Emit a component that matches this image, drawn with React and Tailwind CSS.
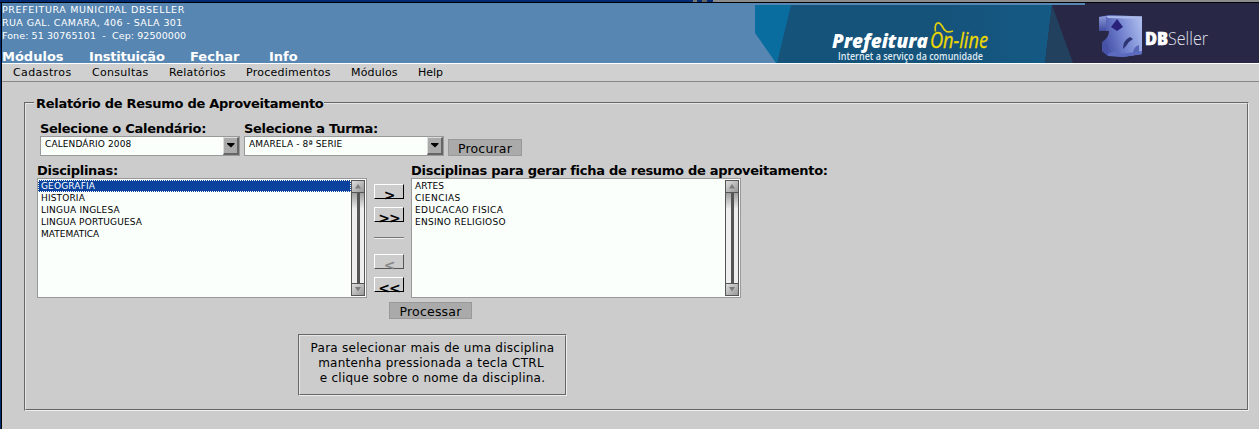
const groove = 'border border-t-[#666] border-l-[#666] border-r-[#eee] border-b-[#eee]';
const grooveIn = 'border border-t-[#e6e6e6] border-l-[#e6e6e6] border-r-[#666] border-b-[#666]';
const label = 'h-[15px] text-[13px] leading-[15px] font-bold tracking-[-0.28px] whitespace-nowrap';

function Brand() {
  return (
    <svg className="block shrink-0" width="504" height="60" viewBox="0 0 504 60">
      <defs>
        <linearGradient id="mid" x1="0" x2="1">
          <stop offset="0" stopColor="#15537b" />
          <stop offset="0.65" stopColor="#15537b" />
          <stop offset="1" stopColor="#145a84" />
        </linearGradient>
        <linearGradient id="cube" x1="0" x2="1" y1="0.3" y2="0">
          <stop offset="0" stopColor="#4450a6" />
          <stop offset="0.45" stopColor="#7383d0" />
          <stop offset="1" stopColor="#b3c3f0" />
        </linearGradient>
        <linearGradient id="side" x1="0" x2="0" y2="1">
          <stop offset="0" stopColor="#8b99d8" />
          <stop offset="1" stopColor="#414ca0" />
        </linearGradient>
        <filter id="soft"><feGaussianBlur stdDeviation="0.6" /></filter>
      </defs>
      <rect width="504" height="60" fill="#282846" />
      <path d="M0 0H330V2H0Z" fill="#5786b2" />
      <path d="M0 2H297L290 60H0Z" fill="url(#mid)" />
      <path d="M297 2L318 60H290Z" fill="#22415f" />
      <path d="M0 2H36L22 60H0Z" fill="#0a6d9f" />
      <path d="M0 30L21 60H0Z" fill="#5786b2" />
      <text x="77" y="45" textLength="96" lengthAdjust="spacingAndGlyphs" fill="#fff" fontFamily="Open Sans" fontWeight="800" fontStyle="italic" fontSize="20">Prefeitura</text>
      <text x="175" y="45" textLength="58" lengthAdjust="spacingAndGlyphs" fill="#f0d900" stroke="#f0d900" strokeWidth="0.3" fontFamily="Open Sans" fontStyle="italic" fontSize="21">On-line</text>
      <path d="M180.500 28.500C179 19 184 18 187 23C190 29 192 30 198 28" fill="none" stroke="#e0ce10" strokeWidth="1.7" />
      <text x="83" y="57" textLength="145" lengthAdjust="spacingAndGlyphs" fill="#dfeaf2" fontFamily="Open Sans" fontWeight="600" fontSize="10">Internet a serviço da comunidade</text>
      <g filter="url(#soft)">
        <path d="M344 14L354 12L387 13.500V51L368 54L352 52.500L347 48V39Q354 35 354 28H344Z" fill="url(#cube)" />
        <path d="M344 14L351 13V28H344Z" fill="url(#side)" />
        <path d="M351 13L387 13.500V16L353 15Z" fill="#aab8ea" />
        <path d="M347 39L353 42L353 52.500L347 48Z" fill="#4651a5" />
        <path d="M362 16L368 24L362 28L356 24Z" fill="#29247a" />
        <path d="M368 46Q368 37 375 34L378 36Q374 38 371 43Z" fill="#2f3474" />
        <path d="M378 50Q378 44 384 42L384 50Z" fill="#5866b6" />
        <path d="M353 51Q360 46 366 51L387 48V51L368 54L353 53Z" fill="#5b6abf" />
      </g>
      <text x="390" y="41.500" textLength="23" lengthAdjust="spacingAndGlyphs" fill="#fff" stroke="#fff" strokeWidth="0.6" fontFamily="Open Sans" fontWeight="800" fontSize="17">DB</text>
      <text x="413" y="41.500" textLength="40" lengthAdjust="spacingAndGlyphs" fill="#e2e2ee" fontFamily="Open Sans" fontWeight="300" fontSize="18">Seller</text>
    </svg>
  );
}

function Select({ value }) {
  return (
    <div className="flex h-[20px] w-[200px] justify-between border border-[#999] bg-[#fafffc]">
      <span className="pl-[4px] pt-px text-[9px] leading-[12px] tracking-[0.12px]">{value}</span>
      <span className="flex h-[18px] w-[16px] items-center justify-center border-t border-l border-r-2 border-b-2 border-t-[#ddd] border-l-[#ddd] border-r-[#666] border-b-[#666] bg-[#aaa]">
        <svg width="8" height="5" viewBox="0 0 8 5"><path d="M0 0H7.5V1L4 4.5L0 1Z" /></svg>
      </span>
    </div>
  );
}

function Arrow({ down }) {
  return (
    <span className="flex h-[13px] shrink-0 items-center justify-center border-y border-[#555] bg-linear-to-br from-[#ddd] to-[#999]">
      <svg width="6" height="5" viewBox="0 0 6 5"><path d={down ? 'M0 0H6L3 4.5Z' : 'M0 4.5H6L3 0Z'} fill="#7b7b7b" /></svg>
    </span>
  );
}

function List({ items, selected }) {
  return (
    <div className="flex h-[120px] w-[330px] border border-[#999] bg-[#fafffc] pr-px">
      <ul className="min-w-0 flex-1 pt-px text-[9px] leading-[12px]">
        {items.map(([t, tracking]) => (
          <li key={t} className={`${tracking} ${t === selected ? 'h-[12px] border border-dotted border-white bg-[#0a429e] pl-[2px] leading-[10px] text-white' : 'h-[12px] pl-[3px]'}`}>{t}</li>
        ))}
      </ul>
      <div className="my-px flex h-[116px] w-[14px] flex-col border-r border-l border-[#555] bg-linear-to-b from-[#999] from-10% via-[#eee] via-25% to-[#eee] to-80%">
        <Arrow />
        <span className="mx-auto w-[3px] flex-1 bg-[#555]" />
        <Arrow down />
      </div>
    </div>
  );
}

function Move({ children, off }) {
  return (
    <button className={off
      ? 'flex h-[15px] w-[30px] justify-center border border-t-white border-l-white border-r-[#555] border-b-[#555] pt-[3px] text-[14px] leading-[14px] font-bold tracking-[-1px] text-[#888]'
      : 'flex h-[15px] w-[30px] justify-center border border-t-white border-l-white border-r-black border-b-black pt-[3px] text-[14px] leading-[14px] font-bold tracking-[-1px]'}>{children}</button>
  );
}

export default function App() {
  return (
    <div className="flex h-[429px] w-[1259px] flex-col overflow-hidden bg-[#ccc] font-['DejaVu_Sans',sans-serif] text-black">
      <div className="flex h-[3px] shrink-0 border-b border-black">
        <span className="w-[693px] bg-[#032b73]" /><span className="w-[4px] bg-[#777]" /><span className="w-[5px] bg-[#032b73]" /><span className="w-[5px] bg-[#666]" /><span className="w-[6px] bg-[#032b73]" /><span className="flex-1 bg-[#8c8c8c]" />
      </div>
      <div className="flex min-h-0 flex-1 border-l border-[#032b73]">
        <div className="flex min-w-0 flex-1 flex-col border-l border-black">
          <header className="flex h-[61px] shrink-0 border-b border-white bg-[#5786b2] text-white">
            <div className="w-[753px]">
              <div className="text-[9.5px] leading-[13px] whitespace-pre">
                <p className="tracking-[0.64px]">PREFEITURA MUNICIPAL DBSELLER</p>
                <p className="tracking-[0.4px]">RUA GAL. CAMARA, 406 - SALA 301</p>
                <p className="tracking-[0.09px]">Fone: 51 30765101  -  Cep: 92500000</p>
              </div>
              <nav className="mt-[7px] flex text-[13px] leading-[16px] font-bold">
                <a className="w-[87px]">Módulos</a><a className="w-[101px] tracking-[-0.2px]">Instituição</a><a className="w-[79px]">Fechar</a><a>Info</a>
              </nav>
            </div>
            <Brand />
          </header>
          <nav className="flex h-[18px] shrink-0 border-b border-[#888] bg-[#d0d0d0] pl-[11px] text-[11px] leading-[18px]">
            <a className="w-[79px] tracking-[0.4px]">Cadastros</a><a className="w-[77px] tracking-[0.3px]">Consultas</a><a className="w-[77px] tracking-[0.2px]">Relatórios</a><a className="w-[105px] tracking-[0.25px]">Procedimentos</a><a className="w-[67px] tracking-[0.15px]">Módulos</a><a>Help</a>
          </nav>
          <section className={`mt-[20px] ml-[22px] h-[309px] w-[1225px] ${groove}`}>
            <div className={`h-full ${grooveIn}`}>
              <h1 className="-mt-[8px] ml-[8px] h-[16px] w-[290px] bg-[#ccc] pl-[2px] text-[13px] leading-[16px] font-bold tracking-[-0.28px] whitespace-nowrap">Relatório de Resumo de Aproveitamento</h1>
              <div className="mt-[9px] ml-[14px] flex gap-[4px]">
                <div><p className={label}>Selecione o Calendário:</p><Select value="CALENDÁRIO 2008" /></div>
                <div><p className={label}>Selecione a Turma:</p><Select value="AMARELA - 8ª SERIE" /></div>
                <button className="mt-[18px] h-[17px] w-[74px] border border-[#999] bg-[#aaa] text-[12.5px] leading-[17px] tracking-[0.2px]">Procurar</button>
              </div>
              <div className="mt-[7px] ml-[11px] flex">
                <div className="w-[337px]"><p className={label}>Disciplinas:</p><List selected="GEOGRAFIA" items={[['GEOGRAFIA', 'tracking-[0.15px]'], ['HISTORIA', 'tracking-[0.15px]'], ['LINGUA INGLESA', 'tracking-[0.2px]'], ['LINGUA PORTUGUESA', 'tracking-[0.16px]'], ['MATEMATICA', 'tracking-normal']]} /></div>
                <div className="flex w-[37px] flex-col pt-[21px]">
                  <Move>&gt;</Move>
                  <div className="mt-[8px]"><Move>&gt;&gt;</Move></div>
                  <div className="mt-[15px] h-[2px] w-[30px] border-t border-b border-t-[#777] border-b-[#eee]" />
                  <div className="mt-[15px]"><Move off>&lt;</Move></div>
                  <div className="mt-[8px]"><Move>&lt;&lt;</Move></div>
                </div>
                <div><p className={label}>Disciplinas para gerar ficha de resumo de aproveitamento:</p><List items={[['ARTES', 'tracking-[0.1px]'], ['CIENCIAS', 'tracking-[0.45px]'], ['EDUCACAO FISICA', 'tracking-[0.4px]'], ['ENSINO RELIGIOSO', 'tracking-[0.26px]']]} /></div>
              </div>
              <button className="mt-[4px] ml-[363px] block h-[17px] w-[83px] border border-[#999] bg-[#aaa] text-[12.5px] leading-[17px] tracking-[0.2px]">Processar</button>
              <div className={`mt-[15px] ml-[272px] h-[62px] w-[269px] ${groove}`}>
                <p className={`h-full pt-[5px] text-center text-[12px] leading-[15px] tracking-[0.27px] whitespace-nowrap ${grooveIn}`}>Para selecionar mais de uma disciplina<br /><span className="pr-[3px]">mantenha pressionada a tecla CTRL</span><br />e clique sobre o nome da disciplina.</p>
              </div>
            </div>
          </section>
        </div>
      </div>
    </div>
  );
}
